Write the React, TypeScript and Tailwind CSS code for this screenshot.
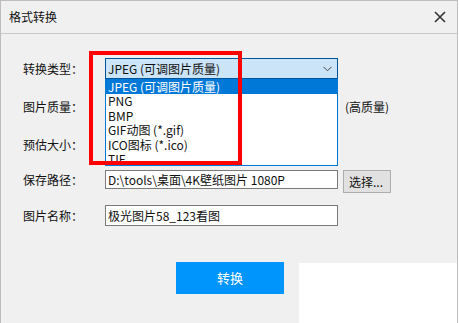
import React from "react";

const font = { fontFamily: '"Noto Sans CJK SC", "Noto Sans", sans-serif' };

const options = ["JPEG (可调图片质量)", "PNG", "BMP", "GIF动图 (*.gif)", "ICO图标 (*.ico)", "TIF"];

const Label = ({ text }: { text: string }) => (
  <div className="w-[104px] pl-[22px] shrink-0 text-[12px] text-[#111]">{text}</div>
);

const CloseIcon = () => (
  <svg width="12" height="12" viewBox="0 0 12 12">
    <path d="M1 1 L11 11 M11 1 L1 11" stroke="#333" strokeWidth="1.6" />
  </svg>
);

const Chevron = () => (
  <svg width="9" height="6" viewBox="0 0 9 6">
    <path d="M0.5 0.8 L4.5 4.8 L8.5 0.8" stroke="#444" strokeWidth="1" fill="none" />
  </svg>
);

export default function App() {
  return (
    <div
      className="relative w-[458px] h-[323px] bg-[#f0f0f0] border-l border-t border-r border-[#bdbdbd] overflow-hidden"
      style={font}
    >
      {/* title bar */}
      <div className="h-[33px] flex items-center justify-between border-b border-[#c9c9c9] pl-[8px] pr-[11px]">
        <div className="text-[12px] text-[#111] mt-[-1px]">格式转换</div>
        <CloseIcon />
      </div>

      {/* form */}
      <div className="flex flex-col">
        <div className="flex items-center h-[21px] mt-[24px]">
          <Label text="转换类型：" />
          <div className="relative w-[233px] h-[21px] bg-[#cce4f7] border border-[#005499] flex items-center justify-between pl-[2px] pr-[5px]">
            <span className="text-[12px] text-[#111]">JPEG (可调图片质量)</span>
            <Chevron />
            {/* open dropdown list */}
            <div className="absolute left-[-1px] top-[20px] w-[233px] h-[87px] bg-white border border-[#0078d7] overflow-hidden z-10">
              {options.map((o, i) => (
                <div
                  key={i}
                  className={
                    i === 0
                      ? "h-[14.4px] leading-[14.4px] pl-[2px] text-[12px] bg-[#0078d7] text-white"
                      : "h-[14.4px] leading-[14.4px] pl-[2px] text-[12px] text-[#111]"
                  }
                >
                  {o}
                </div>
              ))}
            </div>
          </div>
        </div>

        <div className="flex items-center h-[20px] mt-[18px]">
          <Label text="图片质量：" />
          <div className="w-[240px] shrink-0" />
          <div className="text-[12px] text-[#111]">(高质量)</div>
        </div>

        <div className="flex items-center h-[20px] mt-[18px]">
          <Label text="预估大小：" />
        </div>

        <div className="flex items-start h-[23px] mt-[15px]">
          <div className="h-[19px] flex items-center">
            <Label text="保存路径：" />
          </div>
          <div className="w-[233px] h-[19px] bg-white border border-[#7a7a7a] flex items-center pl-[2px] text-[12px] text-[#111]">
            D:\tools\桌面\4K壁纸图片 1080P
          </div>
          <div className="ml-[5px] w-[48px] h-[23px] bg-[#e1e1e1] border border-[#adadad] flex items-center pl-[5px] text-[12px] text-[#111]">
            选择...
          </div>
        </div>

        <div className="flex items-center h-[21px] mt-[12px]">
          <Label text="图片名称：" />
          <div className="w-[233px] h-[21px] bg-white border border-[#7a7a7a] flex items-center pl-[2px] text-[12px] text-[#111]">
            极光图片58_123看图
          </div>
        </div>

        <div className="flex mt-[36px] pl-[175px]">
          <div className="w-[108px] h-[32px] bg-[#0094fd] flex items-center justify-center text-[13px] text-white">
            转换
          </div>
        </div>
      </div>

      {/* red annotation box */}
      <div className="absolute left-[88px] top-[50px] w-[153px] h-[114px] border-4 border-[#ff0000] z-20" />

      {/* white patch bottom right */}
      <div className="absolute left-[298px] top-[262px] right-0 bottom-0 bg-white" />
    </div>
  );
}
